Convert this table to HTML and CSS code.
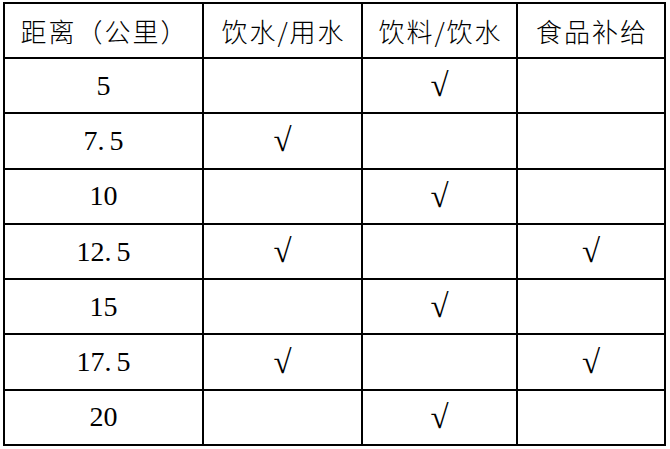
FILE: index.html
```html
<!DOCTYPE html>
<html lang="zh-CN">
<head>
<meta charset="utf-8">
<title>补给站</title>
<link rel="stylesheet" href="styles.css">
</head>
<body>
<table class="grid">
  <thead>
    <tr class="head">
      <th class="c1">距离（公里）</th>
      <th class="c2">饮水/用水</th>
      <th class="c3">饮料/饮水</th>
      <th class="c4">食品补给</th>
    </tr>
  </thead>
  <tbody>
    <tr><td class="num">5</td><td></td><td class="chk">√</td><td></td></tr>
    <tr><td class="num">7<span class="pt">.</span>5</td><td class="chk">√</td><td></td><td></td></tr>
    <tr><td class="num">10</td><td></td><td class="chk">√</td><td></td></tr>
    <tr><td class="num">12<span class="pt">.</span>5</td><td class="chk">√</td><td></td><td class="chk">√</td></tr>
    <tr><td class="num">15</td><td></td><td class="chk">√</td><td></td></tr>
    <tr><td class="num">17<span class="pt">.</span>5</td><td class="chk">√</td><td></td><td class="chk">√</td></tr>
    <tr><td class="num">20</td><td></td><td class="chk">√</td><td></td></tr>
  </tbody>
</table>
</body>
</html>
```
FILE: styles.css
```css
html, body {
  margin: 0;
  padding: 0;
  background: #ffffff;
}

.grid {
  margin: 2px 0 0 3px;
  border-collapse: separate;
  border-spacing: 0;
  table-layout: fixed;
  width: 663px;
  border-left: 2px solid #000;
  border-top: 2px solid #000;
}

.grid th,
.grid td {
  box-sizing: border-box;
  padding: 0;
  border-right: 2px solid #000;
  border-bottom: 2px solid #000;
  text-align: center;
  vertical-align: middle;
  color: #000;
  line-height: 1;
}

.grid th {
  height: 55px;
  padding-left: 2px;
  font-family: "Noto Sans CJK SC", sans-serif;
  font-weight: 300;
  font-size: 26px;
  letter-spacing: 2px;
}

.grid td {
  height: 55.3px;
  font-family: "Liberation Serif", serif;
  font-size: 28px;
}

.c1 { width: 199px; }
.c2 { width: 159px; }
.c3 { width: 155px; }
.c4 { width: 148px; }

.grid .pt {
  margin-right: 5px;
}

.grid td.chk {
  font-family: "Liberation Serif", "DejaVu Serif", serif;
  font-size: 33px;
}
```
